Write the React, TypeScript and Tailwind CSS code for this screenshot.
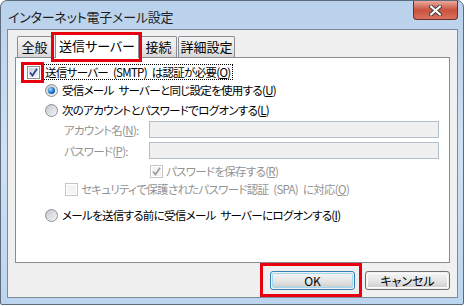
import React from "react";

function Check({ color = "#2a4f9e" }: { color?: string }) {
  return (
    <svg width="9" height="9" viewBox="0 0 9 9" className="block">
      <path d="M1 4.5 L3.5 7.5 L8 0.8" fill="none" stroke={color} strokeWidth="1.8" />
    </svg>
  );
}

function Checkbox({ checked, disabled }: { checked?: boolean; disabled?: boolean }) {
  return (
    <div
      className={`w-[13px] h-[13px] shrink-0 border p-[1px] bg-white ${
        disabled ? "border-[#c6c6c6]" : "border-[#8e8f8f]"
      }`}
    >
      <div
        className={`w-full h-full flex items-center justify-center ${
          disabled
            ? "bg-[#f4f4f4]"
            : "bg-linear-to-br from-[#c9ced6] to-[#f7f8f9]"
        }`}
      >
        {checked && <Check color={disabled ? "#9fa0a2" : "#27449a"} />}
      </div>
    </div>
  );
}

function Radio({ checked }: { checked?: boolean }) {
  return (
    <div className="w-[13px] h-[13px] shrink-0 rounded-full border border-[#8e8f8f] bg-linear-to-br from-[#c4c8cf] to-[#f5f6f7] flex items-center justify-center">
      {checked && (
        <div className="w-[7px] h-[7px] rounded-full bg-radial-[at_35%_35%] from-[#9fe0ff] via-[#1e78d2] to-[#0b3f86]" />
      )}
    </div>
  );
}

function Mn({ c }: { c: string }) {
  return (
    <>
      (<u>{c}</u>)
    </>
  );
}

function Tab({ label, selected }: { label: string; selected?: boolean }) {
  if (selected) {
    return (
      <div className="h-[25px] -mb-[1px] flex items-center justify-center whitespace-nowrap border border-b-0 border-[#898c95] rounded-t-[2px] bg-white text-[13px]">
        {label}
      </div>
    );
  }
  return (
    <div className="h-[21px] flex items-center justify-center whitespace-nowrap border border-b-0 border-[#898c95] rounded-t-[2px] bg-linear-to-b from-[#f3f3f3] via-[#ebebeb] to-[#d6d6d6] text-[13px]">
      {label}
    </div>
  );
}

function Button({ label, primary }: { label: string; primary?: boolean }) {
  return (
    <div
      className={`w-[85px] h-[19px] rounded-[3px] border p-[1px] ${
        primary ? "border-[#3c7fb1]" : "border-[#707070]"
      }`}
    >
      <div
        className={`w-full h-full rounded-[2px] border flex items-center justify-center text-[12px] bg-linear-to-b from-[#f2f2f2] via-[#e6e6e6] to-[#d0d0d0] ${
          primary ? "border-[#9fd8f2]" : "border-[#fbfbfb]"
        }`}
      >
        {label}
      </div>
    </div>
  );
}

export default function App() {
  return (
    <div className="relative w-[465px] h-[306px] bg-white text-black font-['Noto_Sans_CJK_JP','Noto_Sans',sans-serif] [font-feature-settings:'palt'] leading-[16px]">
      <div className="w-[464px] h-[305px] flex flex-col rounded-t-[7px] rounded-b-[2px] border border-[#5d6b7c] bg-linear-to-b from-[#b9d1eb] via-[#cfe1f4] to-[#bcd5ef]">
        {/* title bar */}
        <div className="h-[28px] flex justify-between">
          <div className="pl-[7px] pt-[7px] text-[13px] tracking-[-0.2px] leading-[18px] text-[#1e1e1e]">
            インターネット電子メール設定
          </div>
          <div className="mr-[5px] w-[45px] h-[19px] rounded-b-[4px] border border-t-0 border-[#6b2f2a] bg-linear-to-b from-[#e9a99c] via-[#c9513f] to-[#d9705e] flex items-center justify-center">
            <svg width="13" height="11" viewBox="0 0 13 11">
              <path d="M2 1.5 L11 9.5 M11 1.5 L2 9.5" stroke="#3b3b3b" strokeWidth="4" strokeLinecap="round" />
              <path d="M2 1.5 L11 9.5 M11 1.5 L2 9.5" stroke="#ffffff" strokeWidth="2.2" strokeLinecap="round" />
            </svg>
          </div>
        </div>

        {/* client area */}
        <div className="ml-[6px] mr-[5px] mb-[6px] flex-1 flex flex-col border border-[#7d8b9b] bg-[#f0f0f0]">
          <div className="pt-[3px] px-[7px]">
            <div className="h-[24px] flex items-end pl-[2px] relative z-10">
              <div className="w-[35px]">
                <Tab label="全般" />
              </div>
              <div className="w-[84px] ml-[3px]">
                <Tab label="送信サーバー" selected />
              </div>
              <div className="w-[37px] ml-[1px]">
                <Tab label="接続" />
              </div>
              <div className="w-[57px] ml-[1px]">
                <Tab label="詳細設定" />
              </div>
            </div>

            {/* tab panel */}
            <div className="h-[206px] border border-[#898c95] bg-white pl-[11px] pt-[6px] text-[11.5px] tracking-[-0.7px] [word-spacing:3px] whitespace-nowrap">
              <div className="h-[16px] flex items-center">
                <Checkbox checked />
                <div className="ml-[3px] px-[1px] border border-dotted border-black leading-[14px]">
                  送信サーバー (SMTP) は認証が必要<Mn c="O" />
                </div>
              </div>
              <div className="h-[16px] mt-[2px] ml-[18px] flex items-center gap-[4px]">
                <Radio checked />
                <span>
                  受信メール サーバーと同じ設定を使用する<Mn c="U" />
                </span>
              </div>
              <div className="h-[16px] mt-[4px] ml-[18px] flex items-center gap-[4px]">
                <Radio />
                <span>
                  次のアカウントとパスワードでログオンする<Mn c="L" />
                </span>
              </div>
              <div className="h-[17px] mt-[3px] ml-[37px] flex items-center text-[#939393]">
                <span className="w-[85px] shrink-0">
                  アカウント名<Mn c="N" />:
                </span>
                <div className="w-[290px] h-[17px] border border-[#b4bfcc] bg-[#f0f0f0]" />
              </div>
              <div className="h-[17px] mt-[4px] ml-[37px] flex items-center text-[#939393]">
                <span className="w-[85px] shrink-0">
                  パスワード<Mn c="P" />:
                </span>
                <div className="w-[290px] h-[17px] border border-[#b4bfcc] bg-[#f0f0f0]" />
              </div>
              <div className="h-[16px] mt-[4px] ml-[123px] flex items-center gap-[3px] text-[#939393]">
                <Checkbox checked disabled />
                <span>
                  パスワードを保存する<Mn c="R" />
                </span>
              </div>
              <div className="h-[16px] mt-[2px] ml-[38px] flex items-center gap-[3px] text-[#939393]">
                <Checkbox disabled />
                <span>
                  セキュリティで保護されたパスワード認証 (SPA) に対応<Mn c="Q" />
                </span>
              </div>
              <div className="h-[16px] mt-[10px] ml-[18px] flex items-center gap-[4px]">
                <Radio />
                <span>
                  メールを送信する前に受信メール サーバーにログオンする<Mn c="I" />
                </span>
              </div>
            </div>
          </div>

          {/* buttons */}
          <div className="mt-[8px] pr-[7px] flex justify-end gap-[10px]">
            <Button label="OK" primary />
            <Button label="キャンセル" />
          </div>
        </div>
      </div>

      {/* red annotation boxes */}
      <div className="absolute left-[51px] top-[32px] w-[91px] h-[30px] border-[3px] border-[#e8000e] z-20" />
      <div className="absolute left-[21px] top-[62px] w-[23px] h-[21px] border-[3px] border-[#e8000e] z-20" />
      <div className="absolute left-[260px] top-[263px] w-[102px] h-[34px] border-[3px] border-[#e8000e] z-20" />
    </div>
  );
}
